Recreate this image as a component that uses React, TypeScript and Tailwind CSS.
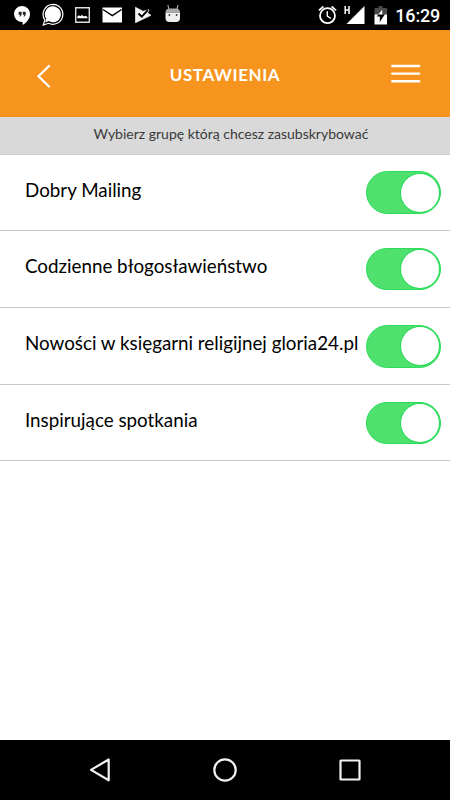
import React from "react";

const groups = [
  { label: "Dobry Mailing", row: "h-[76px]", toggle: "mt-[16.400px]" },
  { label: "Codzienne błogosławieństwo", row: "h-[77px]", toggle: "mt-[16.500px]" },
  { label: "Nowości w księgarni religijnej gloria24.pl", row: "h-[77px]", toggle: "mt-[17px]" },
  { label: "Inspirujące spotkania", row: "h-[76px]", toggle: "mt-[16.500px]" },
];

function StatusBar() {
  return (
    <div className="flex h-[30px] shrink-0 items-start justify-between bg-black pr-[10px] pl-[14px]">
      <div className="flex">
        <svg width="17" height="30" viewBox="14 0 17 30">
          <path d="M22 6a8 8 0 0 1 8 8c0 4.600-3.200 8.600-7.400 11v-3H22a8 8 0 0 1 0-16z" fill="#fff" />
          <path d="M18.700 11.800h2.900v3l-1.200 1.800h-1l.8-1.900h-1.500zM22.800 11.800h2.900v3l-1.200 1.800h-1l.8-1.900h-1.500z" fill="#222" />
        </svg>
        <svg className="ml-[10px]" width="23" height="30" viewBox="41 0 23 30">
          <path d="M53 6.300a8 8 0 1 1-4.300 14.800L45.200 22.500l1-3.800A8 8 0 0 1 53 6.300z" fill="#fff" />
          <path d="M53 4.300a10 10 0 1 1-4.500 19L43.300 25l1.600-5A10 10 0 0 1 53 4.300z" fill="none" stroke="#fff" strokeWidth="1.200" />
        </svg>
        <svg className="ml-[10px]" width="17" height="30" viewBox="74 0 17 30">
          <path d="M75.700 7.700h13.600v14.600H75.700z" fill="none" stroke="#ddd" strokeWidth="1.400" />
          <path d="M77.300 18.300v-1.800l1.500-1.300 1.500 1 1.600-1.200 2.100 1.600 1.500-.8 2 1.200v1.300z" fill="#fff" />
        </svg>
        <svg className="ml-[11px]" width="21" height="30" viewBox="102 0 21 30">
          <path d="M102.500 7.500h19.500v15h-19.500z" fill="#fff" />
          <path d="M103 9.500l9.300 6.200 9.300-6.200" fill="none" stroke="#000" strokeWidth="1.500" />
        </svg>
        <svg className="ml-[11px]" width="18" height="30" viewBox="134 0 18 30">
          <path d="M135.500 7.300l7.500 4 6-1.500L147.500 13l3.500 2.200-15.500 7.500z" fill="#f4f4f4" stroke="#f4f4f4" strokeWidth=".7" strokeLinejoin="round" />
          <path d="M138.500 13.500l3.300 3.200 6-6.500" fill="none" stroke="#000" strokeWidth="1.800" />
        </svg>
        <svg className="ml-[12px]" width="18" height="30" viewBox="164 0 18 30">
          <path d="M167.800 5l1.500 5M178 5L176.700 10" stroke="#aaa" strokeWidth="1.100" />
          <path d="M165.500 12.500q0-4 4.500-4h5.500q4.500 0 4.500 4z" fill="#aaa" />
          <path d="M165.500 12.500H180V18q0 4-4 4h-6.500q-4 0-4-4z" fill="#eee" />
          <circle cx="169.400" cy="15" r=".9" fill="#333" /><circle cx="176.600" cy="15" r=".9" fill="#333" />
        </svg>
      </div>
      <div className="flex">
        <svg width="20" height="30" viewBox="318 0 20 30">
          <circle cx="327.500" cy="15.700" r="7.500" fill="none" stroke="#fff" strokeWidth="1.800" />
          <path d="M318.900 10.300l4.500-3.800M336.100 10.300l-4.500-3.800" stroke="#fff" strokeWidth="1.700" />
          <path d="M327.300 11.200v5l3.700 2.300" fill="none" stroke="#fff" strokeWidth="1.400" />
        </svg>
        <svg className="ml-[6px]" width="22" height="30" viewBox="344 0 22 30">
          <path d="M364.500 6v18H346.500z" fill="#fff" />
          <path d="M343.500 5h7v10h-7z" fill="#000" />
          <path d="M345.200 6v8M349 6v8M345.200 10H349" stroke="#fff" strokeWidth="1.500" />
        </svg>
        <svg className="ml-[8px]" width="14" height="30" viewBox="374 0 14 30">
          <path d="M378.500 6h4v2h4.500v7H374.500V8h4z" fill="#4a4a4a" />
          <path d="M374.500 14.500H387v10h-12.500z" fill="#fff" />
          <path d="M382.300 9.500l-5.500 7h3v5.500l5-7.400h-2.500z" fill="#000" />
          <path d="M382.300 9.500l-4 5h4z" fill="#fff" />
        </svg>
        <div className="ml-[8px] flex h-[31px] w-[44px] items-center justify-end whitespace-nowrap font-['Roboto',sans-serif] text-[18px] font-medium tracking-[-0.2px] text-white">16:29</div>
      </div>
    </div>
  );
}

function Header() {
  return (
    <header className="flex h-[87px] shrink-0 items-start bg-[#f7941d] pr-[29px] pl-[36px]">
      <button aria-label="Wstecz" className="mt-[33px] w-[22px]">
        <svg width="16" height="26" viewBox="36 63 16 26">
          <path d="M49 66L38.500 76.300 49 86.500" fill="none" stroke="#fff" strokeWidth="2.300" strokeLinecap="round" />
        </svg>
      </button>
      <h1 className="mt-[33px] flex-1 pl-[1px] text-center text-[17px] leading-[24px] font-bold tracking-[0.600px] text-white">USTAWIENIA</h1>
      <button aria-label="Menu" className="mt-[33px]">
        <svg width="30" height="24" viewBox="391 63 30 24">
          <path d="M392.200 66h27M392.200 73.600h27M392.200 81.300h27" stroke="#fff" strokeWidth="2.400" strokeLinecap="round" />
        </svg>
      </button>
    </header>
  );
}

function Toggle({ offset }: { offset: string }) {
  return (
    <button role="switch" aria-checked="true" className={"flex h-[42.500px] w-[75px] shrink-0 items-center justify-end rounded-full border border-[#2bdc5b] bg-[#4fe06e] pr-px " + offset}>
      <span className="size-[38px] rounded-full bg-white ring-1 ring-[#2bdc5b]" />
    </button>
  );
}

export default function App() {
  return (
    <div className="flex h-[800px] w-[450px] flex-col overflow-hidden bg-white font-['Lato',sans-serif]">
      <StatusBar />
      <Header />
      <p className="h-[38px] shrink-0 border-b border-[#cecece] bg-[#d9d9d9] pt-[7px] text-center text-[14px] leading-[20px] text-[#3a3a3a]">
        <span className="ml-[12px]">Wybierz grupę którą chcesz zasubskrybować</span>
      </p>
      <main className="flex-1">
        {groups.map((g) => (
          <div key={g.label} className={"flex justify-between border-b border-[#c8c8c8] pr-[9px] pl-[25px] " + g.row}>
            <span className="mt-[22px] whitespace-nowrap text-[18.800px] leading-[26px] text-black">{g.label}</span>
            <Toggle offset={g.toggle} />
          </div>
        ))}
      </main>
      <nav className="flex h-[60px] shrink-0 items-center justify-center gap-[95px] bg-black">
        <svg width="30" height="30" viewBox="85 755 30 30">
          <path d="M108.700 759.500v20.800L91 769.900z" fill="none" stroke="#f2f2f2" strokeWidth="2.200" strokeLinejoin="round" />
        </svg>
        <svg width="30" height="30" viewBox="210 755 30 30">
          <circle cx="225" cy="770" r="10.700" fill="none" stroke="#f2f2f2" strokeWidth="2.200" />
        </svg>
        <svg width="30" height="30" viewBox="335 755 30 30">
          <rect x="340.500" y="760.500" width="19" height="19" rx=".5" fill="none" stroke="#f2f2f2" strokeWidth="2.200" />
        </svg>
      </nav>
    </div>
  );
}
